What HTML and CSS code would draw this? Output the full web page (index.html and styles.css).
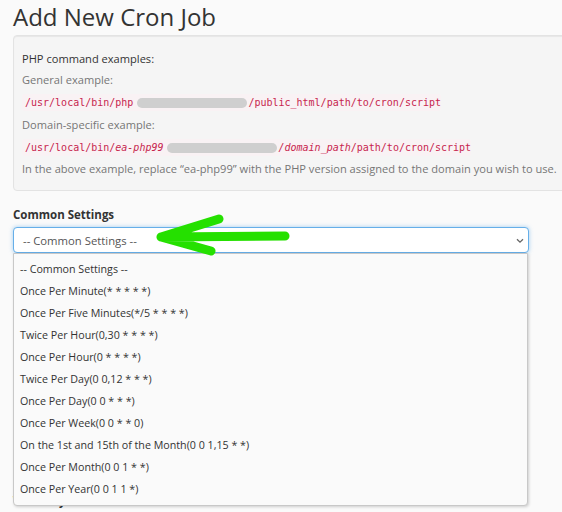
FILE: index.html
```html
<!DOCTYPE html>
<html>
<head>
<meta charset="utf-8">
<link rel="stylesheet" href="styles.css">
</head>
<body>
<h1 class="title">Add New Cron Job</h1>
<div class="well">
  <p class="heading">PHP command examples:</p>
  <p class="muted">General example:</p>
  <p class="codeline"><code>/usr/local/bin/php<span class="blur"></span>/public_html/path/to/cron/script</code></p>
  <p class="muted">Domain-specific example:</p>
  <p class="codeline last"><code>/usr/local/bin/<i>ea-php99</i><span class="blur"></span><i>/domain_path</i>/path/to/cron/script</code></p>
  <p class="muted">In the above example, replace “ea-php99” with the PHP version assigned to the domain you wish to use.</p>
</div>

<div class="form">
  <div class="group">
    <label class="lbl">Common Settings</label>
    <div class="select-wrap">
      <div class="select">
        <span>-- Common Settings --</span>
        <svg class="chev" width="8" height="6" viewBox="0 0 8 6"><path d="M1 1.2 L4 4.2 L7 1.2" fill="none" stroke="#666" stroke-width="1.3"/></svg>
      </div>
      <ul class="menu">
        <li>-- Common Settings --</li>
        <li>Once Per Minute(* * * * *)</li>
        <li>Once Per Five Minutes(*/5 * * * *)</li>
        <li>Twice Per Hour(0,30 * * * *)</li>
        <li>Once Per Hour(0 * * * *)</li>
        <li>Twice Per Day(0 0,12 * * *)</li>
        <li>Once Per Day(0 0 * * *)</li>
        <li>Once Per Week(0 0 * * 0)</li>
        <li>On the 1st and 15th of the Month(0 0 1,15 * *)</li>
        <li>Once Per Month(0 0 1 * *)</li>
        <li>Once Per Year(0 0 1 1 *)</li>
      </ul>
      <svg class="arrow" width="150" height="50" viewBox="0 0 150 50">
        <path d="M10 27 L134 26 M10 27 L68 9 M10 27 L60 41" fill="none" stroke="#25e000" stroke-width="9" stroke-linecap="round" stroke-linejoin="round"/>
      </svg>
    </div>
  </div>
  <div class="group"><label class="lbl">Minute</label><div class="input"></div></div>
  <div class="group"><label class="lbl">Hour</label><div class="input"></div></div>
  <div class="group"><label class="lbl">Day</label><div class="input"></div></div>
  <div class="group"><label class="lbl">Month</label><div class="input"></div></div>
  <div class="group"><label class="lbl">Weekday</label><div class="input"></div></div>
</div>
</body>
</html>
```

FILE: styles.css
```css
html, body {
  margin: 0;
  padding: 0;
  background: #fafafa;
  overflow: hidden;
}
body {
  padding: 0 0 0 13px;
  font-family: "Open Sans", "Liberation Sans", sans-serif;
  color: #333;
  font-size: 11.1px;
  width: 600px;
  height: 512px;
}
.title {
  font-size: 24px;
  font-weight: 400;
  margin: 0;
  line-height: 33px;
  height: 35px;
  color: #333;
}
.well {
  background: #f5f5f5;
  border: 1px solid #e3e3e3;
  border-radius: 4px;
  box-shadow: inset 0 1px 1px rgba(0,0,0,0.06);
  padding: 14px 0 12px 8px;
  height: 128px;
  box-sizing: content-box;
}
.well p {
  margin: 0;
  line-height: 17px;
  white-space: nowrap;
}
.heading { color: #333; margin-bottom: 4px !important; }
.muted { color: #767676; }
.codeline {
  margin: 5px 0 6px 0 !important;
  height: 17px;
}
.codeline.last { margin-bottom: 5px !important; }
code {
  font-family: "DejaVu Sans Mono", monospace;
  font-size: 10px;
  color: #c7254e;
  background: #f9f2f4;
  padding: 2px 0 2px 3px;
  border-radius: 3px;
  display: inline-flex;
  align-items: center;
  line-height: 13px;
}
code i { font-style: italic; }
.blur {
  display: inline-block;
  width: 110px;
  height: 10px;
  border-radius: 5px;
  background: #cfcfcf;
  margin: 0 1px 0 4px;
}
.form { margin-top: 15px; }
.group { margin-bottom: 9px; }
.lbl {
  display: block;
  font-weight: 700;
  font-size: 11.5px;
  line-height: 17px;
  margin-bottom: 4px;
}
.group:first-child { margin-bottom: 15px; }
.select-wrap { position: relative; width: 516px; }
.select {
  height: 26px;
  box-sizing: border-box;
  border: 1px solid #66afe9;
  border-radius: 4px;
  background: #fff;
  box-shadow: 0 0 4px rgba(102,175,233,0.6);
  display: flex;
  align-items: center;
  justify-content: space-between;
  padding: 0 4px 0 9px;
  color: #555;
  font-size: 11.3px;
}
.chev { margin-top: 2px; }
.menu {
  position: absolute;
  left: 0;
  top: 26px;
  width: 515px;
  box-sizing: border-box;
  margin: 0;
  padding: 4px 0 5px 0;
  list-style: none;
  background: #fafafa;
  border: 1px solid #c8c8c8;
  border-radius: 0 0 4px 4px;
  box-shadow: 1px 1px 3px rgba(0,0,0,0.18);
  z-index: 2;
}
.menu li {
  height: 22px;
  line-height: 22px;
  padding-left: 6px;
  font-size: 10.7px;
  color: #333;
  white-space: nowrap;
}
.arrow {
  position: absolute;
  left: 138px;
  top: -17px;
  z-index: 3;
}
.input {
  height: 26px;
  border: 1px solid #ccc;
  border-radius: 4px;
  background: #fff;
  width: 505px;
  box-sizing: border-box;
}
```
